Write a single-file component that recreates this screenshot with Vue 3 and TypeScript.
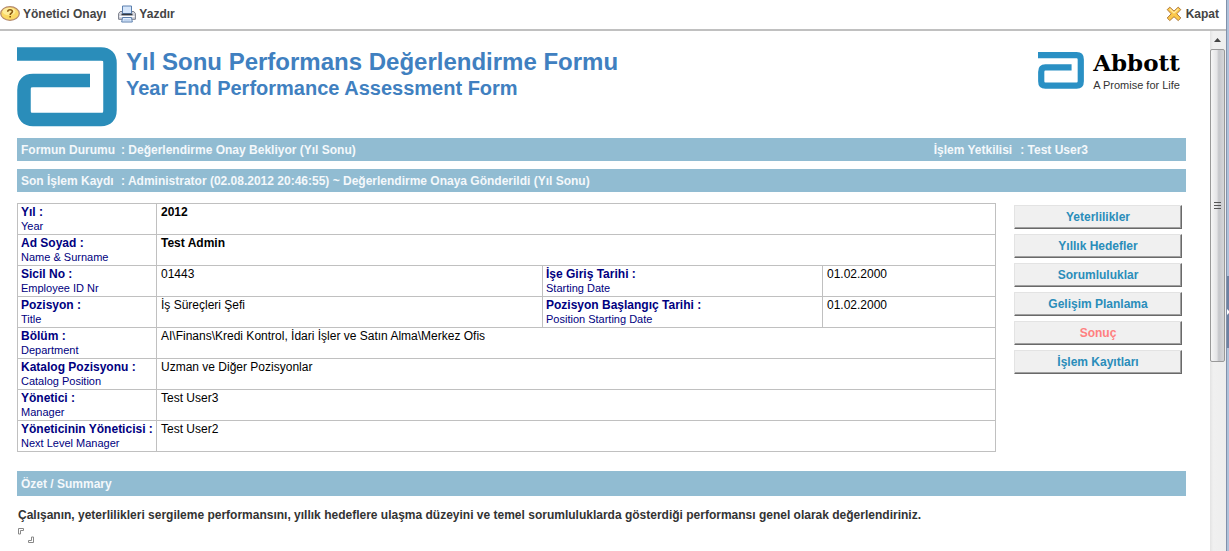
<script setup lang="ts">
interface Field {
  label: string
  sub: string
  value: string
  strong?: boolean
}

const rows: Field[][] = [
  [{ label: 'Yıl :', sub: 'Year', value: '2012', strong: true }],
  [{ label: 'Ad Soyad :', sub: 'Name & Surname', value: 'Test Admin', strong: true }],
  [
    { label: 'Sicil No :', sub: 'Employee ID Nr', value: '01443' },
    { label: 'İşe Giriş Tarihi :', sub: 'Starting Date', value: '01.02.2000' },
  ],
  [
    { label: 'Pozisyon :', sub: 'Title', value: 'İş Süreçleri Şefi' },
    { label: 'Pozisyon Başlangıç Tarihi :', sub: 'Position Starting Date', value: '01.02.2000' },
  ],
  [{ label: 'Bölüm :', sub: 'Department', value: 'AI\\Finans\\Kredi Kontrol, İdari İşler ve Satın Alma\\Merkez Ofis' }],
  [{ label: 'Katalog Pozisyonu :', sub: 'Catalog Position', value: 'Uzman ve Diğer Pozisyonlar' }],
  [{ label: 'Yönetici :', sub: 'Manager', value: 'Test User3' }],
  [{ label: 'Yöneticinin Yöneticisi :', sub: 'Next Level Manager', value: 'Test User2' }],
]

const sections = [
  { name: 'Yeterlilikler', current: false },
  { name: 'Yıllık Hedefler', current: false },
  { name: 'Sorumluluklar', current: false },
  { name: 'Gelişim Planlama', current: false },
  { name: 'Sonuç', current: true },
  { name: 'İşlem Kayıtları', current: false },
]
</script>

<template>
  <div class="window">
    <div class="frame">
      <header class="toolbar">
        <button type="button" class="tool">
          <svg width="20" height="16" viewBox="0 0 20 16" aria-hidden="true">
            <ellipse cx="10" cy="7.5" rx="9.3" ry="6.8" fill="#fbd964" stroke="#b58a6c" stroke-width="1.2" />
            <ellipse cx="9" cy="5.5" rx="6.5" ry="3.8" fill="#fff0a6" opacity=".8" />
            <path d="M7.7 5.8Q7.8 3.8 10 3.8Q12.4 3.8 12.4 5.6Q12.4 6.6 11.2 7.3Q10.2 7.9 10.2 8.9M10.2 10.1V11.6" fill="none" stroke="#8a5a10" stroke-width="1.6" />
          </svg>
          <span>Yönetici Onayı</span>
        </button>
        <button type="button" class="tool print">
          <svg width="18" height="18" viewBox="0 0 18 18" aria-hidden="true">
            <path d="M2.2 6.5H15.8L17.4 8.5V14.3H.6V8.5Z" fill="#d5d7df" stroke="#777b88" />
            <path d="M4.5 8.5V1H13.5V8.5Z" fill="#d6e6fa" stroke="#5b7fae" />
            <path d="M3.5 9.5H14.5" stroke="#33373f" stroke-width="1.6" />
            <path d="M1.5 11.5H16.5" stroke="#fff" />
            <path d="M4.5 12.5H13.5L14.3 17H3.7Z" fill="#e4effd" stroke="#5b7fae" />
            <path d="M5.5 15H12.5" stroke="#9dbbe2" />
          </svg>
          <span>Yazdır</span>
        </button>
        <button type="button" class="tool close">
          <svg width="16" height="16" viewBox="0 0 16 16" aria-hidden="true">
            <path d="M3.8 1.2L8 5.1L12.2 1.2L14.8 3.6L10.8 7.8L14.8 12L12.2 14.6L8 10.7L3.8 14.6L1.2 12L5.2 7.8L1.2 3.6Z" fill="#fbc84a" stroke="#b07a3a" stroke-linejoin="round" />
            <path d="M3.8 3L8 7L12.2 3" fill="none" stroke="#ffe9a0" stroke-width="1.2" />
          </svg>
          <span>Kapat</span>
        </button>
      </header>

      <div class="body">
        <main class="page">
          <div class="heading">
            <svg width="100" height="80" viewBox="0 0 100 80" aria-hidden="true">
              <path d="M0 7H84Q93 7 93 16V63Q93 72.500 84 72.500H16Q7 72.500 7 63V43Q7 33.500 16 33.500H73" fill="none" stroke="#2a8dba" stroke-width="13.500" />
            </svg>
            <div class="titles">
              <h1>Yıl Sonu Performans Değerlendirme Formu</h1>
              <h2>Year End Performance Assessment Form</h2>
            </div>
            <div class="brand">
              <svg width="46" height="37" viewBox="0 0 100 80" preserveAspectRatio="none" aria-hidden="true">
                <path d="M0 7H84Q93 7 93 16V63Q93 72.500 84 72.500H16Q7 72.500 7 63V43Q7 33.500 16 33.500H73" fill="none" stroke="#2a90c4" stroke-width="13.500" />
              </svg>
              <div class="brand-text">
                <span class="brand-name">Abbott</span>
                <span class="brand-line">A Promise for Life</span>
              </div>
            </div>
          </div>

          <div class="bar">
            <span class="key">Formun Durumu</span>
            <span>: Değerlendirme Onay Bekliyor (Yıl Sonu)</span>
            <div class="owner">
              <span>İşlem Yetkilisi</span>
              <span>: Test User3</span>
            </div>
          </div>
          <div class="bar">
            <span class="key">Son İşlem Kaydı</span>
            <span>: Administrator (02.08.2012 20:46:55) ~ Değerlendirme Onaya Gönderildi (Yıl Sonu)</span>
          </div>

          <div class="details">
            <table>
              <colgroup>
                <col class="c1" />
                <col />
                <col class="c3" />
                <col class="c4" />
              </colgroup>
              <tbody>
                <tr v-for="(row, i) in rows" :key="i">
                  <template v-for="field in row" :key="field.label">
                    <th scope="row">
                      {{ field.label }}
                      <small>{{ field.sub }}</small>
                    </th>
                    <td :colspan="row.length === 1 ? 3 : 1" :class="{ strong: field.strong }">{{ field.value }}</td>
                  </template>
                </tr>
              </tbody>
            </table>
            <nav class="sections">
              <button v-for="s in sections" :key="s.name" type="button" :class="{ current: s.current }">{{ s.name }}</button>
            </nav>
          </div>

          <h3 class="bar summary">Özet / Summary</h3>
          <p class="prompt">
            Çalışanın, yeterlilikleri sergileme performansını, yıllık hedeflere ulaşma düzeyini ve temel sorumluluklarda gösterdiği performansı genel olarak değerlendiriniz.
          </p>
          <svg class="corners" width="18" height="18" viewBox="0 0 18 18" aria-hidden="true">
            <path d="M1.500 7V1.500H6.500V3.500H3.500V7Z" fill="#fff" stroke="#888" />
            <path d="M16.500 10V15.500H11.500V13.500H14.500V10Z" fill="#fff" stroke="#888" />
          </svg>
        </main>

        <div class="scrollbar" aria-hidden="true">
          <svg class="up" width="15" height="18" viewBox="0 0 15 18">
            <path d="M4 11L7.500 7L11 11Z" fill="#444" />
          </svg>
          <div class="thumb">
            <svg width="8" height="9" viewBox="0 0 8 9">
              <path d="M0 1.500H7M0 4.500H7M0 7.500H7" stroke="#555" />
            </svg>
          </div>
        </div>
      </div>
    </div>
    <div class="edge" aria-hidden="true">
      <div class="grip">
        <svg width="2" height="6" viewBox="0 0 2 6">
          <path d="M0 0L2 2V4L0 6Z" fill="#fff" />
        </svg>
      </div>
    </div>
  </div>
</template>

<style>
body {
  margin: 0;
  background: #fff;
}
</style>

<style scoped>
.window {
  display: flex;
  min-height: 100vh;
  font: 12px/14px "Liberation Sans", Arial, sans-serif;
  color: #000;
}
.frame {
  flex: 1;
  min-width: 0;
  display: flex;
  flex-direction: column;
}
.toolbar {
  display: flex;
  align-items: center;
  height: 29px;
  border-bottom: 2px solid #c0c0c0;
  padding-right: 7px;
}
.tool {
  display: flex;
  align-items: center;
  gap: 3px;
  padding: 0 0 2px;
  border: 0;
  background: none;
  font: bold 12px/14px "Liberation Sans", Arial, sans-serif;
  color: #444;
}
.print {
  margin-left: 12px;
}
.close {
  margin-left: auto;
  gap: 4px;
}
.body {
  flex: 1;
  display: flex;
}
.page {
  flex: 1;
  min-width: 0;
  padding: 16px 24px 0 17px;
}
.heading {
  display: flex;
  align-items: flex-start;
  gap: 9px;
  margin-bottom: 11px;
}
.titles {
  flex: 1;
  color: #4080c0;
}
h1,
h2 {
  margin: 0;
  font-weight: bold;
}
h1 {
  font-size: 24px;
  line-height: 30px;
}
h2 {
  font-size: 20px;
  line-height: 22px;
}
.brand {
  display: flex;
  gap: 9px;
  padding: 5px 6px 0 0;
}
.brand-text {
  display: flex;
  flex-direction: column;
}
.brand-name {
  font: bold 23px/22px "DejaVu Serif", serif;
}
.brand-line {
  margin-top: 4px;
  font-size: 11px;
  line-height: 14px;
  color: #333;
}
.bar {
  display: flex;
  align-items: center;
  height: 23px;
  margin: 0 0 8px;
  padding: 0 4px;
  background: #91bcd2;
  color: #f4f8fb;
  font-size: 12px;
  font-weight: bold;
}
.key {
  width: 100px;
}
.owner {
  display: flex;
  gap: 8px;
  margin-left: auto;
  padding-right: 94px;
}
.details {
  display: flex;
  align-items: flex-start;
  gap: 18px;
  margin: 11px 4px 19px 0;
}
table {
  flex: 1;
  width: 100%;
  min-width: 0;
  table-layout: fixed;
  border-collapse: collapse;
}
.c1 {
  width: 139px;
}
.c3 {
  width: 280px;
}
.c4 {
  width: 173px;
}
th,
td {
  padding: 1px 3px 1px 4px;
  border: 1px solid #c0c0c0;
  text-align: left;
  vertical-align: top;
  line-height: 14px;
}
th {
  padding: 1px 3px;
  color: #000080;
  white-space: nowrap;
}
small {
  display: block;
  font-size: 11px;
  font-weight: normal;
  line-height: 14px;
}
.strong {
  font-weight: bold;
}
.sections {
  display: flex;
  flex-direction: column;
  flex: none;
  gap: 5px;
  width: 168px;
  padding-top: 2px;
}
.sections button {
  height: 24px;
  padding: 0;
  border: 1px solid #e3e3e3;
  border-right-color: #696969;
  border-bottom-color: #696969;
  box-shadow: inset -1px -1px #a0a0a0;
  background: #f0f0f0;
  font: bold 12px/14px "Liberation Sans", Arial, sans-serif;
  color: #2a8dba;
}
.sections .current {
  color: #ff8080;
}
.summary {
  height: 25px;
  margin-bottom: 12px;
}
.prompt {
  margin: 0 0 5px 1px;
  font-weight: bold;
  color: #333;
}
.corners {
  display: block;
}
.scrollbar {
  display: flex;
  flex-direction: column;
  width: 15px;
  padding-right: 1px;
  background: linear-gradient(90deg, #e3e3e3, #f0f0f0 20%, #eee);
}
.up {
  display: block;
}
.thumb {
  display: flex;
  align-items: center;
  justify-content: center;
  height: 311px;
  border: 1px solid #999;
  border-radius: 2px;
  background: linear-gradient(90deg, #f6f6f6, #e4e4e6 45%, #c5c6ca 60%, #d5d6d9);
}
.edge {
  display: flex;
  align-items: center;
  width: 2px;
  border-left: 1px solid #8291aa;
  background: #afc1da;
}
.grip {
  display: flex;
  align-items: center;
  width: 2px;
  height: 72px;
  margin-top: 72px;
  background: #6e82a3;
}
</style>
